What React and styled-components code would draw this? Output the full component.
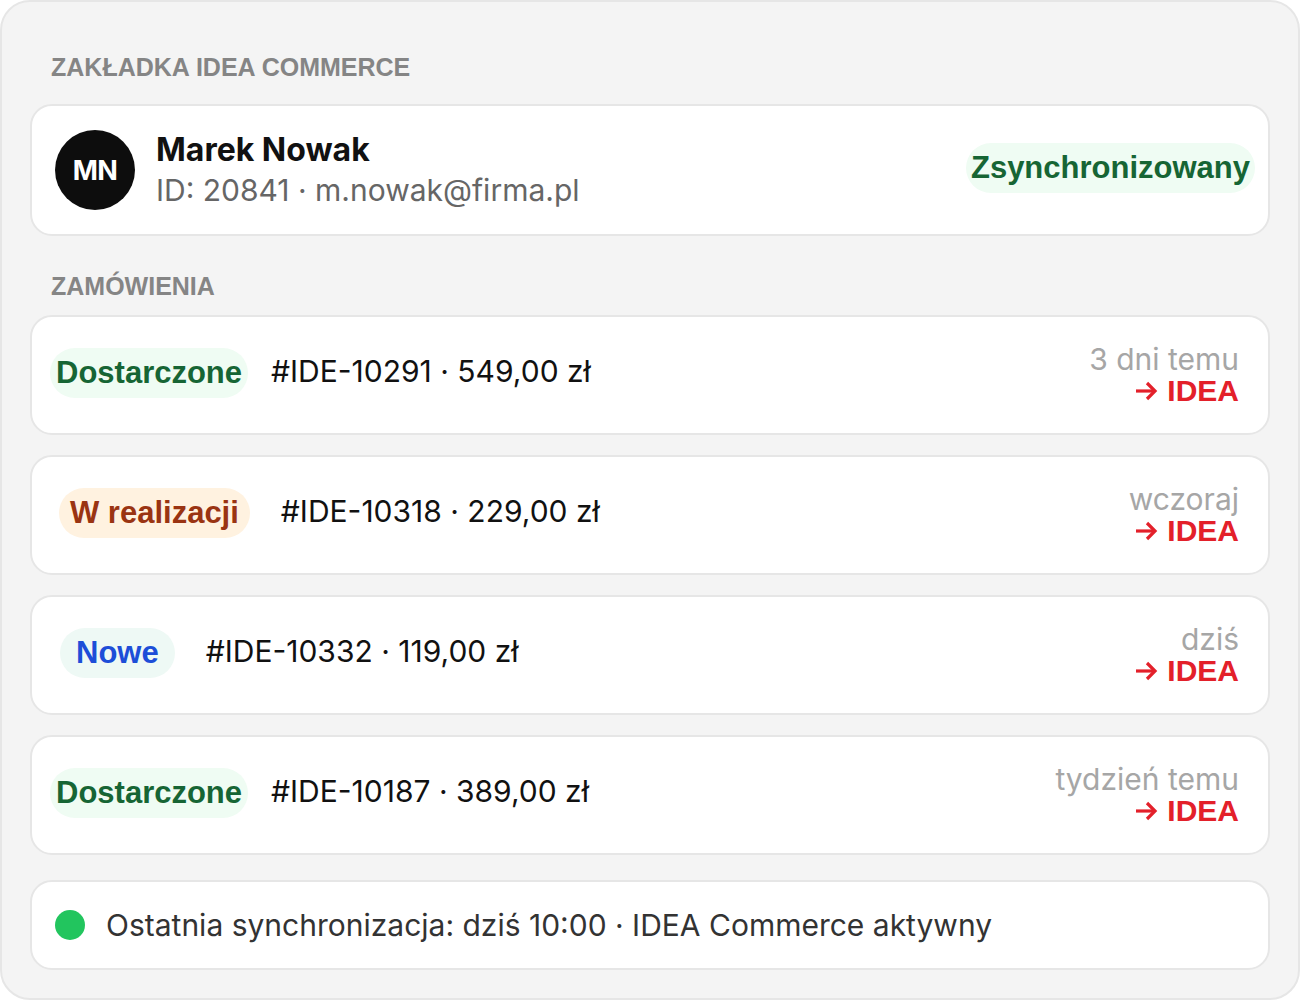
import React from 'react'
import styled, { createGlobalStyle } from 'styled-components'

const GlobalStyle = createGlobalStyle`
  html, body {
    margin: 0;
    padding: 0;
    background: #ffffff;
  }
  body {
    font-family: Inter, "Noto Sans", sans-serif;
  }
`;

const Panel = styled.div`
  box-sizing: border-box;
  width: 1300px;
  height: 1000px;
  background: #f4f4f4;
  border: 2px solid #e6e6e6;
  border-radius: 30px;
  padding: 28px 28px 0;
  display: flex;
  flex-direction: column;
`;

const SectionLabel = styled.div`
  box-sizing: border-box;
  font-family: "Liberation Sans", Arial, sans-serif;
  font-weight: 700;
  font-size: 25px;
  color: #858585;
  text-transform: uppercase;
  padding: ${(p) => p.pt || 0}px 21px 0;
  height: ${(p) => p.h}px;
  display: flex;
  align-items: center;
`;

const Card = styled.div`
  box-sizing: border-box;
  background: #ffffff;
  border: 2px solid #e6e6e6;
  border-radius: 22px;
  display: flex;
  align-items: center;
  height: ${(p) => p.h}px;
  padding: ${(p) => p.pad};
`;

const Avatar = styled.div`
  width: 80px;
  height: 80px;
  border-radius: 50%;
  background: #0d0d0d;
  color: #fff;
  display: flex;
  align-items: center;
  justify-content: center;
  font-weight: 700;
  font-size: 27px;
  letter-spacing: -0.5px;
  flex-shrink: 0;
`;

const Who = styled.div`
  margin-left: 21px;
  display: flex;
  flex-direction: column;
  gap: 4px;
  flex: 1;
`;

const Name = styled.div`
  font-weight: 700;
  font-size: 32px;
  line-height: 36px;
  color: #111;
`;

const Meta = styled.div`
  font-size: 30px;
  line-height: 36px;
  color: #666;
`;

const Pill = styled.span`
  font-family: "Liberation Sans", Arial, sans-serif;
  font-weight: 700;
  font-size: 31px;
  line-height: 50px;
  height: 50px;
  border-radius: 25px;
  white-space: nowrap;
  flex-shrink: 0;
  color: ${(p) => p.fg};
  background: ${(p) => p.bg};
  padding: 0 ${(p) => p.px}px;
  margin-left: ${(p) => p.ml}px;
  margin-bottom: ${(p) => p.lift || 0}px;
`;

const OrderList = styled.div`
  display: flex;
  flex-direction: column;
  gap: 20px;
`;

const OrderNo = styled.div`
  flex: 1;
  margin-left: ${(p) => p.gap}px;
  margin-bottom: 8px;
  font-size: 30px;
  color: #111;
  white-space: nowrap;
`;

const Side = styled.div`
  display: flex;
  flex-direction: column;
  align-items: flex-end;
`;

const When = styled.div`
  font-size: 30px;
  line-height: 32px;
  color: #a6a6a6;
`;

const IdeaLink = styled.a`
  display: flex;
  align-items: center;
  gap: 9px;
  font-family: "Liberation Sans", Arial, sans-serif;
  font-weight: 700;
  font-size: 30px;
  line-height: 32px;
  color: #e3202a;
  text-decoration: none;
`;

const Footer = styled(Card)`
  margin-top: 25px;
`;

const Dot = styled.span`
  width: 30px;
  height: 30px;
  border-radius: 50%;
  background: #22c55e;
  flex-shrink: 0;
`;

const FooterText = styled.div`
  margin-left: 21px;
  font-size: 30px;
  color: #333;
  white-space: nowrap;
`;

const statuses = {
  delivered: { label: 'Dostarczone', fg: '#166534', bg: '#effcf3', px: 6, ml: 0, gap: 23 },
  progress: { label: 'W realizacji', fg: '#9a3412', bg: '#fff2e0', px: 11, ml: 9, gap: 31 },
  fresh: { label: 'Nowe', fg: '#1d4ed8', bg: '#eef9f5', px: 16, ml: 10, gap: 31 },
};

const orders = [
  { id: '#IDE-10291', price: '549,00 zł', status: 'delivered', when: '3 dni temu' },
  { id: '#IDE-10318', price: '229,00 zł', status: 'progress', when: 'wczoraj' },
  { id: '#IDE-10332', price: '119,00 zł', status: 'fresh', when: 'dziś' },
  { id: '#IDE-10187', price: '389,00 zł', status: 'delivered', when: 'tydzień temu' },
];

const Arrow = () => (
  <svg width="24" height="24" viewBox="0 0 24 24" fill="none" stroke="currentColor" strokeWidth="3.2" strokeLinecap="butt" strokeLinejoin="miter">
    <path d="M2 12h19" />
    <path d="M13 4l8 8-8 8" />
  </svg>
);

const App = () => {
  return (
    <>
      <GlobalStyle />
      <Panel>
        <SectionLabel h={74}>Zakładka IDEA Commerce</SectionLabel>
        <Card h={132} pad="0 13px 0 23px">
          <Avatar>MN</Avatar>
          <Who>
            <Name>Marek Nowak</Name>
            <Meta>ID: 20841 · m.nowak@firma.pl</Meta>
          </Who>
          <Pill fg="#166534" bg="#effcf3" px={5} ml={0} lift={5}>Zsynchronizowany</Pill>
        </Card>

        <SectionLabel h={79} pt={22}>Zamówienia</SectionLabel>
        <OrderList>
          {orders.map((o) => {
            const s = statuses[o.status];
            return (
              <Card key={o.id} h={120} pad="0 29px 0 18px">
                <Pill fg={s.fg} bg={s.bg} px={s.px} ml={s.ml} lift={5}>{s.label}</Pill>
                <OrderNo gap={s.gap}>{o.id} · {o.price}</OrderNo>
                <Side>
                  <When>{o.when}</When>
                  <IdeaLink href="#">
                    <Arrow />
                    IDEA
                  </IdeaLink>
                </Side>
              </Card>
            );
          })}
        </OrderList>

        <Footer h={90} pad="0 24px 0 23px">
          <Dot />
          <FooterText>Ostatnia synchronizacja: dziś 10:00 · IDEA Commerce aktywny</FooterText>
        </Footer>
      </Panel>
    </>
  );
}

export default App
